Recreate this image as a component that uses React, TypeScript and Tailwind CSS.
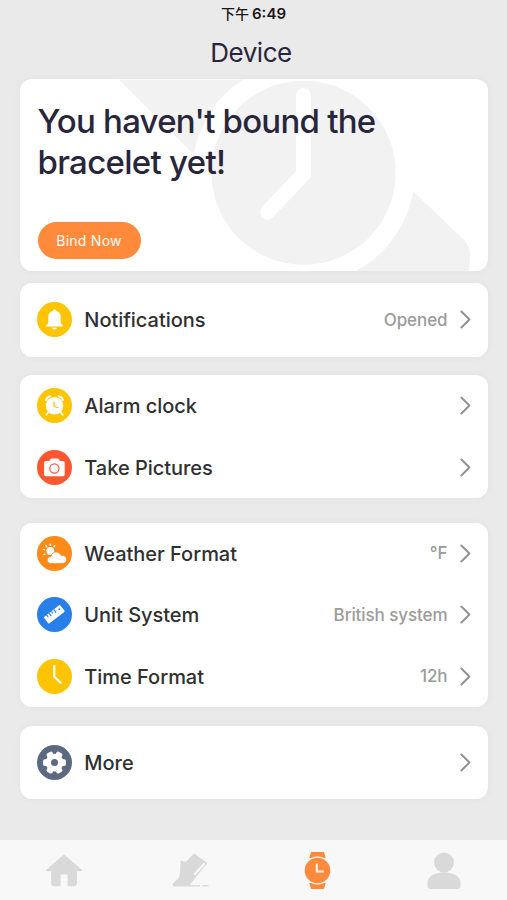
import type { ReactNode } from "react";

const white = "#fff";

function Bell() {
  return (
    <svg viewBox="0 0 35 35" className="size-[35px]">
      <path d="M17.5 7.4c.8 0 1.4.5 1.5 1.3 3 .8 4.7 3.2 4.7 6.2v4.6c0 1.600.7 2.700 2 3.700.6.5.3 1.200-.4 1.200H9.700c-.7 0-1-.7-.4-1.200 1.300-1 2-2.100 2-3.700v-4.600c0-3 1.700-5.400 4.700-6.200.1-.8.7-1.300 1.500-1.300Z" fill={white} />
      <path d="M14.800 25.700h5.400c-.5 1.200-1.500 1.800-2.700 1.800s-2.200-.6-2.700-1.800Z" fill={white} />
    </svg>
  );
}

function Alarm() {
  return (
    <svg viewBox="0 0 35 35" className="size-[35px]">
      <g stroke={white} strokeLinecap="round" fill="none">
        <path d="M9 12.300c.5-2.100 2-3.600 4.300-4M26 12.300c-.5-2.100-2-3.600-4.300-4" strokeWidth="2" />
        <path d="m11.800 23.500-2.500 3.300M23.200 23.500l2.500 3.300" strokeWidth="1.700" />
      </g>
      <circle cx="17.500" cy="17.700" r="8.800" fill={white} />
      <path d="M17 13.800v4.200l2.400 1.500h2.100" stroke="#ffc400" strokeWidth="1.200" fill="none" />
    </svg>
  );
}

function Camera() {
  return (
    <svg viewBox="0 0 35 35" className="size-[35px]">
      <path d="M13.300 9.200c.3-.5.7-.8 1.300-.8h6c.6 0 1 .3 1.300.8l1 1.800h3c1.100 0 1.800.7 1.800 1.800v11.700c0 1.100-.7 1.800-1.800 1.800H8.900c-1.100 0-1.800-.7-1.800-1.800V12.800c0-1.100.7-1.800 1.800-1.800h3.300l1.100-1.800Z" fill={white} />
      <circle cx="17.400" cy="18.500" r="4.600" fill="none" stroke="#ff5632" strokeWidth="1.200" />
    </svg>
  );
}

function Weather() {
  return (
    <svg viewBox="0 0 35 35" className="size-[35px]">
      <circle cx="13.300" cy="15" r="3.900" fill={white} />
      <path d="M7.900 18.200l-.9.500M7.300 13.700l-1-.3M9.600 10.400l-.7-.8M13.400 9.200V8.200M17.100 10.600l.7-.8" stroke={white} strokeWidth="1.500" strokeLinecap="round" />
      <path d="M14.200 27.600c-2.400 0-4-1.500-4-3.500 0-2.100 1.600-3.500 3.800-3.500.4-2.900 2.500-4.700 5.200-4.700 2.400 0 4.100 1.300 4.900 3.400 3.100-.5 5.400 1.400 5.400 4.200 0 2.400-1.700 4.100-4.200 4.100H14.200Z" fill={white} stroke="#ff8a18" strokeWidth=".8" />
    </svg>
  );
}

function Ruler() {
  return (
    <svg viewBox="0 0 35 35" className="size-[35px]">
      <g transform="translate(17.300 17.300) rotate(-38)">
        <rect x="-10.300" y="-4.200" width="20.600" height="8.400" rx="1" fill={white} />
        <path d="M-6.500-4.200v2.700M-3.500-4.200v3.900M-.5-4.200v2.700M2.500-4.200v3.900" stroke="#287fe8" strokeWidth="1.200" />
        <circle cx="7.200" cy="-1" r=".9" fill="#287fe8" />
      </g>
    </svg>
  );
}

function Clock() {
  return (
    <svg viewBox="0 0 35 35" className="size-[35px]">
      <path d="M17.300 6.800v11l6.300 6" fill="none" stroke={white} strokeWidth="2.200" strokeLinecap="round" strokeLinejoin="round" />
    </svg>
  );
}

function Gear() {
  const teeth = [0, 60, 120];
  return (
    <svg viewBox="0 0 35 35" className="size-[35px]">
      <circle cx="17.500" cy="17.600" r="8.900" fill={white} />
      {teeth.map((a) => (
        <rect key={a} x="6" y="14.300" width="23" height="6.600" rx="2" fill={white} transform={`rotate(${a} 17.500 17.600)`} />
      ))}
      <circle cx="17.500" cy="17.600" r="3.500" fill="#5b6a80" />
    </svg>
  );
}

function Chevron() {
  return (
    <svg viewBox="0 0 11 19" className="ml-3 h-[19px] w-[11px] shrink-0">
      <path d="M1.400 1.500 9.400 9.500l-8 8" fill="none" stroke="#929292" strokeWidth="2" strokeLinecap="round" strokeLinejoin="round" />
    </svg>
  );
}

type RowProps = { icon: ReactNode; color: string; label: string; value?: string };

function Row({ icon, color, label, value }: RowProps) {
  return (
    <div className="flex h-[61.500px] items-center pt-[0.200px] pr-[17px] pl-[17.800px]">
      <div className={`size-[35px] shrink-0 rounded-full ${color}`}>{icon}</div>
      <span className="ml-3 flex-1 pt-[0.600px] text-[20px] leading-6 font-[450] tracking-[-0.030px] text-[#303030]">{label}</span>
      {value && <span className="pt-[1.500px] text-[17px] font-[450] tracking-[-0.080px] text-[#9b9b9b]">{value}</span>}
      <Chevron />
    </div>
  );
}

function Card({ children, className = "" }: { children: ReactNode; className?: string }) {
  return (
    <section className={`rounded-[12px] bg-white shadow-[0_0_8px_rgba(0,0,0,0.04)] ${className}`}>{children}</section>
  );
}

function HeroArt() {
  return (
    <svg viewBox="0 0 469 191" className="absolute inset-0 h-full w-full">
      <g fill="#f2f2f2">
        <path d="M99 0H240V90H189Z" />
        <path d="M394 112 445 161Q451 167 451 176L450 192H320V112Z" />
      </g>
      <circle cx="284.200" cy="93.500" r="111.500" fill="#fff" />
      <circle cx="284.200" cy="93.500" r="92.300" fill="#f2f2f2" />
      <path d="M284 16V95L248 133" fill="none" stroke="#fff" strokeWidth="15" strokeLinecap="round" />
    </svg>
  );
}

export default function App() {
  return (
    <div className="flex h-[900px] w-[507px] flex-col overflow-hidden bg-[#eaeaea] font-['Inter','Noto_Sans_CJK_SC',sans-serif]">
      <div className="flex h-7 items-center justify-center gap-[3px] text-[15px] text-[#171717]">
        <span className="text-[14px] leading-5 font-medium">下午</span>
        <span className="font-semibold">6:49</span>
      </div>
      <h1 className="h-[51px] pr-[5px] text-center text-[26px] leading-[50px] font-normal tracking-[-0.500px] text-[#29263b]">Device</h1>
      <main className="flex flex-1 flex-col px-[19.500px]">
        <Card className="relative h-[191.500px] shrink-0 overflow-hidden">
          <HeroArt />
          <div className="relative flex h-full flex-col items-start px-[18px] pt-[22px] pb-3">
            <h2 className="text-[33px] leading-[41px] font-[450] tracking-[-0.780px] text-[#29263b]">
              You haven't bound the
              <br />
              <span className="tracking-[-0.700px]">bracelet yet!</span>
            </h2>
            <button className="mt-auto h-[37px] w-[103px] rounded-full bg-[#ff8a3c] text-[14px] tracking-[0.250px] text-white">Bind Now</button>
          </div>
        </Card>
        <Card className="mt-[12.500px] py-[6px]">
          <Row icon={<Bell />} color="bg-[#ffc400]" label="Notifications" value="Opened" />
        </Card>
        <Card className="mt-[18.500px]">
          <Row icon={<Alarm />} color="bg-[#ffc400]" label="Alarm clock" />
          <Row icon={<Camera />} color="bg-[#ff5632]" label="Take Pictures" />
        </Card>
        <Card className="mt-[24.500px]">
          <Row icon={<Weather />} color="bg-[#ff8a18]" label="Weather Format" value="°F" />
          <Row icon={<Ruler />} color="bg-[#287fe8]" label="Unit System" value="British system" />
          <Row icon={<Clock />} color="bg-[#ffc400]" label="Time Format" value="12h" />
        </Card>
        <Card className="mt-[18.500px] py-[6px]">
          <Row icon={<Gear />} color="bg-[#5b6a80]" label="More" />
        </Card>
      </main>
      <nav className="grid h-[60px] grid-cols-4 items-center justify-items-center bg-[#f8f8f8]">
        <svg viewBox="0 0 40 40" className="size-10 translate-x-px">
          <path d="M20 4.500 2.500 19.500c-.8.700-.4 1.700.6 1.700h4V33c0 2 1 3.200 3 3.200h6.500V24.500h7v11.700H30c2 0 3-1.200 3-3.200V21.200h4c1 0 1.400-1 .6-1.700L20 4.500Z" fill="#d9d9d9" />
        </svg>
        <svg viewBox="0 0 40 40" className="size-10">
          <path d="M23.300 4.300c.6-.6 1.300-.6 1.900 0L36.500 12.300c.6.500.6 1 .1 1.600L18.800 36H4c-1.600 0-1.800-1.800-.8-3l2.700-2.300c2.600-1.800 4-4.500 4.200-8.200l.3-10.600c.1-1.300 1-1.500 2-.8 1.600 1 3.300.9 4.800-.6l6.100-6.200Z" fill="#d9d9d9" />
          <path d="M33.700 14.200 25 24" fill="none" stroke="#f8f8f8" strokeWidth="2.400" strokeLinecap="round" />
          <path d="M4 35.800H30M32.500 35.800H38.500" stroke="#d9d9d9" strokeWidth="1.600" />
        </svg>
        <svg viewBox="0 0 40 40" className="size-10 translate-x-[0.500px]">
          <path d="M13.500 2h13l1.700 6H11.800ZM11.800 33h16.400L26.500 39h-13Z" fill="#ff8a3c" />
          <circle cx="20" cy="20.500" r="14" fill="#f8f8f8" />
          <circle cx="20" cy="20.500" r="12.800" fill="#ff8a3c" />
          <path d="M19.300 13.500v8h7" fill="none" stroke="#f8f8f8" strokeWidth="2" />
        </svg>
        <svg viewBox="0 0 40 40" className="size-10">
          <circle cx="20" cy="12.500" r="10" fill="#d9d9d9" />
          <path d="M3.500 36v-2.500C3.500 26 10 22.500 20 22.500S36.500 26 36.500 33.500V36c0 2-1 3-3 3h-27c-2 0-3-1-3-3Z" fill="#d9d9d9" />
        </svg>
      </nav>
    </div>
  );
}
